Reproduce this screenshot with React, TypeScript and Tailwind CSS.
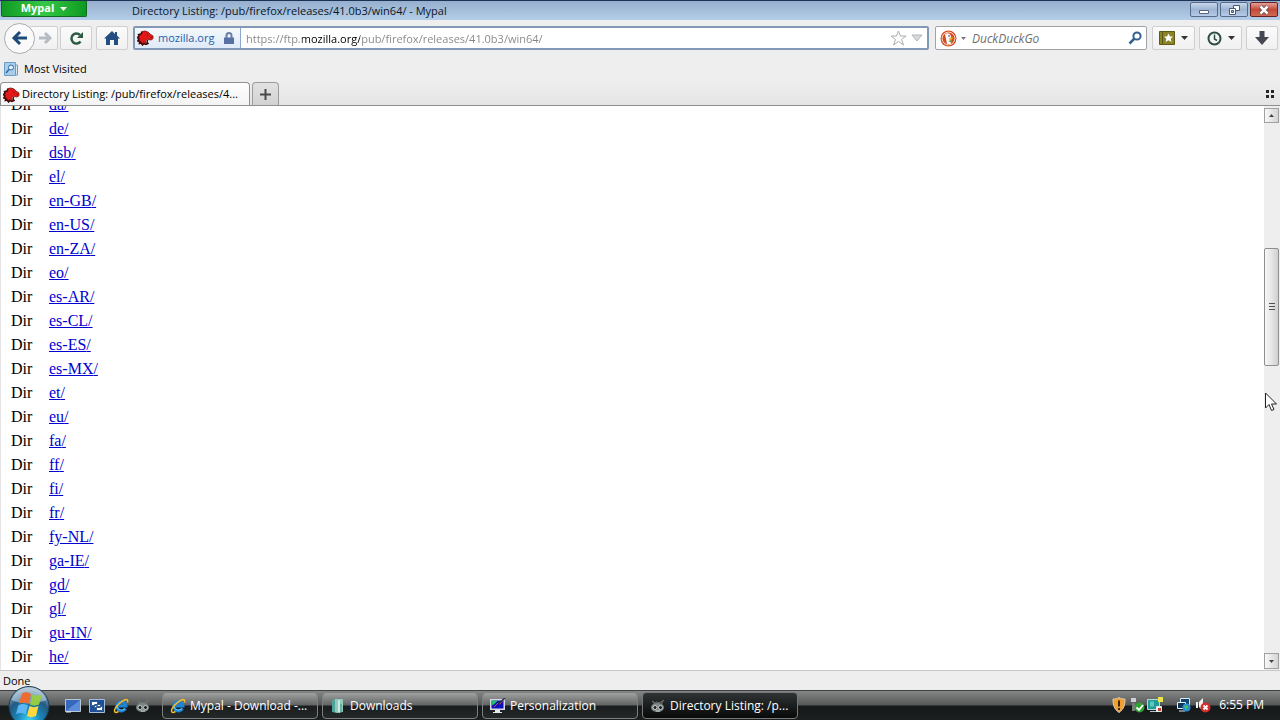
import type { ReactNode } from 'react'
import clsx from 'clsx'

const folders = [
  'da', 'de', 'dsb', 'el', 'en-GB', 'en-US', 'en-ZA', 'eo', 'es-AR', 'es-CL', 'es-ES', 'es-MX',
  'et', 'eu', 'fa', 'ff', 'fi', 'fr', 'fy-NL', 'ga-IE', 'gd', 'gl', 'gu-IN', 'he',
]

function DragonIcon() {
  return (
    <svg width="17" height="16" viewBox="0 0 17 16" className="shrink-0">
      <path d="M5 1.500L8 1l3 1 2 2 3 2v2.500l-1.500 1.500-3-.5-2 .5-.5 2 1 1.500-2 1-2-1-1.500 1.500-1-2-2 .5.500-2-2-.5 1-2-1.500-1.500L2 6 1.500 4.500 4 4z" fill="#e01818" />
      <path d="M5 1.500L4 4l-2.500.5L2 6 .5 7.500 2 9l-1 2 2 .5-.5 2 2-.5 1 2L7 13.500l2 1 2-1-1-1.500.5-2" fill="none" stroke="#3c0909" strokeWidth="1.500" />
      <path d="M5 1.500L8 1l3 1 2 2 3 2v2.500L14.500 10l-4-.5M10 5l1.500.5M13.500 7.500H15" fill="none" stroke="#7c1010" strokeWidth=".8" />
    </svg>
  )
}

function SkullIcon() {
  return (
    <svg width="16" height="16" viewBox="0 0 16 16" className="shrink-0" fill="none">
      <path d="M2 3l3 2 2-1 2 1 2-1 3-2M3 4l2 3M13 3l-2 4" stroke="#6f7876" />
      <ellipse cx="7.500" cy="9.500" rx="6.500" ry="4.500" fill="#7d8785" />
      <circle cx="5" cy="9.500" r="2" fill="#1c2020" stroke="#c6cecb" />
      <circle cx="10.500" cy="9.500" r="2" fill="#1c2020" stroke="#c6cecb" />
      <path d="M6 13h4" stroke="#c6cecb" />
    </svg>
  )
}

function IeIcon() {
  return (
    <svg width="16" height="16" viewBox="0 0 16 16" className="shrink-0" fill="none">
      <path d="M12.500 10.500A4.600 4.600 0 1 1 13 8H5" stroke="#1e84d8" strokeWidth="3" />
      <path d="M12 10.500A4.600 4.600 0 0 1 4 8.500" stroke="#6cc5f8" strokeWidth="1" />
      <path d="M14.500 4.500c.8-2.500-.5-3.500-3-2.500C7 3.800 1.500 10 1.500 13c0 2 2 1.700 4 .5" stroke="#f3bf2c" strokeWidth="1.500" />
    </svg>
  )
}

function FolderIcon() {
  return (
    <svg width="16" height="16" viewBox="0 0 16 16" className="shrink-0">
      <path d="M2 2l5-1v14l-5-1z" fill="#4fa398" />
      <path d="M5 1h8v13l-6 1-2-1z" fill="#8fcabd" />
      <path d="M8 2h2v13l-2-1z" fill="#c9ebe3" />
      <path d="M11 6v8" stroke="#4a8f88" />
    </svg>
  )
}

function MonitorIcon() {
  return (
    <svg width="16" height="16" viewBox="0 0 16 16" className="shrink-0">
      <path d="M0 1h15v11H0z" fill="#d6dae6" />
      <path d="M1.500 2.500h12v8h-12z" fill="#1010b8" />
      <path d="M2 2.500h6l-5 4.500H2z" fill="#1ec46a" />
      <path d="M4 9l4-4 2 1 5-6" stroke="#c04a7c" strokeWidth="1" fill="none" />
      <path d="M8 6l7-6" stroke="#26313f" strokeWidth="1.500" />
      <path d="M5 12h5v2h2v1H3v-1h2z" fill="#e4e7ee" />
    </svg>
  )
}

function Caret({ className }: { className?: string }) {
  return (
    <svg width="7" height="4" viewBox="0 0 7 4" className={clsx('shrink-0', className)}>
      <path d="M0 0h7L3.500 4z" fill="currentColor" />
    </svg>
  )
}

function ToolButton({ label, className, children }: { label: string; className?: string; children: ReactNode }) {
  return (
    <button
      aria-label={label}
      className={clsx('flex h-6 shrink-0 items-center justify-center gap-1.5 rounded-xs border border-[#cfcfd1] bg-linear-to-b from-[#fbfbfb] to-[#f0f0f0]', className)}
    >
      {children}
    </button>
  )
}

function TitleBar() {
  return (
    <header className="flex h-5 shrink-0 items-start border-t border-[#1c3355] bg-linear-to-b from-[#96afce] to-[#b4cde8]">
      <button className="ml-px flex h-4 w-[86px] items-center justify-center gap-1.5 rounded-b-xs border border-t-0 border-[#126a22] bg-linear-to-r from-[#0f9a22] via-[#35c846] to-[#0a9a1f] text-[11px] font-bold text-white">
        Mypal
        <Caret />
      </button>
      <h1 className="ml-[45px] flex-1 truncate text-[11px] leading-[19px] text-[#0b1526]">
        Directory Listing: /pub/firefox/releases/41.0b3/win64/ - Mypal
      </h1>
      <div className="mr-0.5 mt-px flex gap-0.5">
        <button aria-label="Minimize" className="flex h-[15px] w-7 items-center justify-center rounded-xs border border-[#566b8c] bg-linear-to-b from-[#c8d7eb] via-[#9db4d3] to-[#b5cbe6]">
          <svg width="12" height="12" viewBox="0 0 12 12"><path d="M1.500 6.500h9v3h-9z" fill="#fff" stroke="#55647e" /></svg>
        </button>
        <button aria-label="Restore" className="flex h-[15px] w-7 items-center justify-center rounded-xs border border-[#566b8c] bg-linear-to-b from-[#c8d7eb] via-[#9db4d3] to-[#b5cbe6]">
          <svg width="13" height="12" viewBox="0 0 13 12" fill="#fff" stroke="#4a5973"><path d="M5.500 1.500h6v5h-6z" /><path d="M1.500 4.500h6v6h-6z" /><path d="M3.500 6.500h2v2h-2z" fill="#9db4d3" /></svg>
        </button>
        <button aria-label="Close" className="flex h-[15px] w-7 items-center justify-center rounded-xs border border-[#6b2020] bg-linear-to-b from-[#e0a097] via-[#c34a38] to-[#cf6a54]">
          <svg width="12" height="10" viewBox="0 0 12 10"><path d="M2.500 1.500l7 7M9.500 1.500l-7 7" stroke="#57434a" strokeWidth="4" /><path d="M2.500 1.500l7 7M9.500 1.500l-7 7" stroke="#fff" strokeWidth="2.500" /></svg>
        </button>
      </div>
    </header>
  )
}

function NavBar() {
  return (
    <nav className="flex h-9 shrink-0 items-center pl-1 pr-0.5">
      <button aria-label="Back" className="z-10 flex size-[31px] shrink-0 items-center justify-center rounded-full border border-[#a9acb2] bg-[#fafafb]">
        <svg width="17" height="16" viewBox="0 0 17 16" fill="none" stroke="#1c4a78" strokeWidth="3"><path d="M9 2L3 8l6 6M3.500 8H16" /></svg>
      </button>
      <ToolButton label="Forward" className="-ml-1.5 mr-0.5 w-[29px] pl-1">
        <svg width="13" height="14" viewBox="0 0 13 14" fill="none" stroke="#b4bcc3" strokeWidth="3"><path d="M6 2l5 5-5 5M10 7H0" /></svg>
      </ToolButton>
      <ToolButton label="Reload" className="mr-1 w-8">
        <svg width="15" height="15" viewBox="0 0 15 15" fill="none"><path d="M11.500 10.500A5 5 0 1 1 11 4" stroke="#2b5c41" strokeWidth="2.500" /><path d="M14 1v6H8z" fill="#2b5c41" /></svg>
      </ToolButton>
      <ToolButton label="Home" className="w-8">
        <svg width="16" height="14" viewBox="0 0 16 14" fill="#264d80"><path d="M8 0L0 7.500h2V14h4V9h4v5h4V7.500h2l-3-3V1h-2v2z" /></svg>
      </ToolButton>
      <div className="ml-[5px] mr-1.5 flex h-6 flex-1 items-center rounded-xs border-2 border-[#8299b5] bg-white">
        <div className="flex h-full items-center gap-1 border-r border-[#8ba7cb] bg-linear-to-b from-[#f4f8fd] to-[#dfeaf8] pl-0.5 pr-1.5">
          <DragonIcon />
          <span className="w-[58px] text-[11px] text-[#1d5fa8]">mozilla.org</span>
          <svg width="10" height="13" viewBox="0 0 10 13" className="ml-1"><path d="M2.500 6V3.500a2.500 2.500 0 0 1 5 0V6" fill="none" stroke="#6a7ea8" strokeWidth="2" /><path d="M0 5.500h10V12H0z" fill="#5870a3" /></svg>
        </div>
        <input
          type="text"
          aria-label="Address"
          defaultValue="https://ftp.mozilla.org/pub/firefox/releases/41.0b3/win64/"
          className="ml-[5px] h-full min-w-0 flex-1 bg-[linear-gradient(90deg,#858585_56px,#000_56px,#000_114px,#858585_114px)] bg-clip-text text-[11px] text-transparent caret-black outline-none"
        />
        <button aria-label="Bookmark this page" className="mr-1">
          <svg width="17" height="16" viewBox="0 0 17 16"><path d="M8.500 1l2 5h5.500l-4.500 3.500 2 5.500-5-3.500-5 3.500 2-5.500L1 6h5.500z" fill="#fdfdfd" stroke="#a9adb2" /></svg>
        </button>
        <button aria-label="Show history" className="mr-1">
          <svg width="12" height="8" viewBox="0 0 12 8"><path d="M1 1h10L6 7z" fill="#d6d9dc" stroke="#b3b6ba" /></svg>
        </button>
      </div>
      <div className="mr-[5px] flex h-6 w-[212px] shrink-0 items-center rounded-xs border border-[#9fa3a8] bg-white px-1">
        <button aria-label="Search engine" className="mr-1.5 flex items-center gap-1 text-[#777]">
          <svg width="17" height="17" viewBox="0 0 17 17"><circle cx="8.500" cy="8.500" r="8" fill="#d84a20" /><circle cx="8.500" cy="8.500" r="6.400" fill="none" stroke="#f8dccb" /><path d="M5 4c3-2 6 0 6 3l-1 2 1 5H7L6 9z" fill="#fff" /><path d="M9 8l4-.5L12 9.500H9z" fill="#f5b81c" /><path d="M8 11l4-1v3z" fill="#5aa83c" /><circle cx="9" cy="6" r=".8" fill="#223" /></svg>
          <svg width="5" height="3" viewBox="0 0 5 3"><path d="M0 0h5L2.500 3z" fill="currentColor" /></svg>
        </button>
        <input type="text" aria-label="Search" placeholder="DuckDuckGo" className="h-full min-w-0 flex-1 text-xs italic outline-none placeholder:text-[#6f6f6f]" />
        <button aria-label="Go">
          <svg width="14" height="14" viewBox="0 0 14 14" fill="none" stroke="#34608f"><circle cx="9" cy="5" r="3.600" strokeWidth="2" /><path d="M6.500 7.500L1.500 12.500" strokeWidth="2.500" /></svg>
        </button>
      </div>
      <ToolButton label="Bookmarks" className="mr-1 w-[43px] text-[#333]">
        <svg width="16" height="14" viewBox="0 0 16 14"><path d="M.5.5h15v13H.5z" fill="#8a8427" stroke="#5d591b" /><path d="M3.500 1v12" stroke="#5d591b" /><path d="M9.500 2.500l1.500 3h3l-2.300 2.200.8 3.300-3-1.700-3 1.700.8-3.300L5 5.500h3z" fill="#fff" /></svg>
        <Caret />
      </ToolButton>
      <ToolButton label="History" className="mr-1 w-[43px] text-[#333]">
        <svg width="15" height="15" viewBox="0 0 15 15" fill="none" stroke="#2b4f45"><circle cx="7.500" cy="7.500" r="6" strokeWidth="2" /><path d="M7.500 3.500v4.500l2.500 1.500" strokeWidth="1.500" /></svg>
        <Caret />
      </ToolButton>
      <ToolButton label="Downloads" className="w-8">
        <svg width="14" height="14" viewBox="0 0 14 14" fill="#454850"><path d="M4.500 0h5v6H14l-7 8-7-8h4.500z" /></svg>
      </ToolButton>
    </nav>
  )
}

function BookmarksBar() {
  return (
    <div className="flex h-[26px] shrink-0 items-center pl-1">
      <button className="flex items-center gap-1.5 text-[11px] text-black">
        <svg width="14" height="14" viewBox="0 0 14 14"><path d="M.5.5h11v13H.5z" fill="#a9cdea" stroke="#6a9cc8" /><path d="M12 3h1.500v10H12" fill="#d5e7f5" stroke="#6a9cc8" /><circle cx="7" cy="5.500" r="2.500" fill="#e2f1fb" stroke="#336b9e" /><path d="M5 7.500L2 11" stroke="#336b9e" strokeWidth="1.500" /></svg>
        Most Visited
      </button>
    </div>
  )
}

function TabBar() {
  return (
    <div className="flex h-6 shrink-0 items-end justify-between border-b border-[#8e9094] bg-linear-to-b from-[#eeeeee] to-[#e4e4e5]">
      <div className="flex items-end gap-0.5">
        <button className="flex h-[23px] w-[250px] items-center gap-0.5 rounded-t border border-b-0 border-[#8e9094] bg-linear-to-b from-white to-[#f3f3f3] px-0.5 pt-px text-[11px] text-black">
          <DragonIcon />
          <span className="whitespace-nowrap">Directory Listing: /pub/firefox/releases/4...</span>
        </button>
        <button aria-label="New tab" className="flex h-[23px] w-[27px] items-center justify-center rounded-t border border-b-0 border-[#9a9c9f] bg-linear-to-b from-[#e2e2e2] to-[#d2d2d2]">
          <svg width="11" height="11" viewBox="0 0 11 11" stroke="#484848" strokeWidth="2"><path d="M5.500 0v11M0 5.500h11" /></svg>
        </button>
      </div>
      <button aria-label="List all tabs" className="mb-[7px] mr-[5px]">
        <svg width="9" height="8" viewBox="0 0 9 8" fill="#252525"><path d="M0 0h3v3H0zM5 0h3v3H5zM0 5h3v3H0zM5 5h3v3H5z" /></svg>
      </button>
    </div>
  )
}

function ScrollBar() {
  return (
    <div className="flex w-4 shrink-0 flex-col bg-[#eeeeee] pr-px">
      <button aria-label="Scroll up" className="mt-0.5 flex h-[15px] items-center justify-center border border-[#a0a0a0] bg-linear-to-r from-[#f8f8f8] to-[#d4d4d4]">
        <svg width="5" height="3" viewBox="0 0 5 3"><path d="M0 3h5L2.500 0z" fill="#444" /></svg>
      </button>
      <div className="flex-[125]" />
      <div className="flex h-[118px] flex-col items-center justify-center gap-px rounded-xs border border-[#8f8f8f] bg-linear-to-r from-[#f7f7f7] via-[#e6e6e6] to-[#cfcfcf]">
        <span className="h-0.5 w-1.5 border-t border-[#505050]" />
        <span className="h-0.5 w-1.5 border-t border-[#505050]" />
        <span className="h-0.5 w-1.5 border-t border-[#505050]" />
      </div>
      <div className="flex-[287]" />
      <button aria-label="Scroll down" className="mb-px flex h-4 items-center justify-center border border-[#a0a0a0] bg-linear-to-r from-[#f8f8f8] to-[#d4d4d4]">
        <svg width="5" height="3" viewBox="0 0 5 3"><path d="M0 0h5L2.500 3z" fill="#444" /></svg>
      </button>
    </div>
  )
}

function Listing() {
  return (
    <main className="flex min-h-0 flex-1 overflow-hidden bg-white">
      <div className="min-w-0 flex-1 overflow-hidden border-l border-[#e4e4e4]">
        <table className="-mt-[13px] ml-2.5 font-['Liberation_Serif',serif] text-base leading-6 text-black">
          <tbody>
            {folders.map((name) => (
              <tr key={name}>
                <td className="w-[38px] p-0">Dir</td>
                <td className="p-0">
                  <a href={`#${name}`} className="text-[#0000d0] underline">{name}/</a>
                </td>
              </tr>
            ))}
          </tbody>
        </table>
      </div>
      <ScrollBar />
    </main>
  )
}

const tasks = [
  { title: 'Mypal - Download -...', icon: IeIcon },
  { title: 'Downloads', icon: FolderIcon },
  { title: 'Personalization', icon: MonitorIcon },
  { title: 'Directory Listing: /p...', icon: SkullIcon, active: true },
]

function StartOrb() {
  return (
    <svg width="42" height="34" viewBox="0 0 42 34">
      <defs>
        <radialGradient id="orb" cx=".5" cy=".85" r=".85">
          <stop offset="0" stopColor="#3fd4f4" />
          <stop offset=".35" stopColor="#1a86b8" />
          <stop offset=".65" stopColor="#235a82" />
          <stop offset="1" stopColor="#a9c2d4" />
        </radialGradient>
      </defs>
      <circle cx="21" cy="20.500" r="20" fill="url(#orb)" stroke="#1d3a50" />
      <path d="M3.500 14a18.500 18.500 0 0 1 35 0c-10 4-25 5-35 0z" fill="#e4edf3" opacity=".45" />
      <path d="M14 7.500c3.500-2 6-1.500 9 .5l-2.500 10c-3-2-6-2-9.500-.5z" fill="#ee6a30" />
      <path d="M24.500 8.500c3 1.500 6 1.500 9.500 0l-3 10c-3.500 1.500-6 1.500-9 0z" fill="#94cc44" />
      <path d="M10.500 19c3.500-1.500 6.500-1.500 9.500.5l-2.500 9c-3-2-6-2-9.500-.5z" fill="#5cb4f2" />
      <path d="M21.500 20c3 1.500 6 1.500 9 0l-2.500 10c-3.500 1.500-6 1.500-9 0z" fill="#ffd840" />
    </svg>
  )
}

function Tray() {
  return (
    <div className="flex items-center pr-4 pb-0.5">
      <svg width="14" height="16" viewBox="0 0 14 16" className="mr-1"><path d="M7 .5c2 1.500 4 1.500 6 1.500 0 6-1 10-6 13.500C2 12 1 8 1 2c2 0 4 0 6-1.500z" fill="#f0a030" stroke="#d8cdb8" /><path d="M7 3.500v6M7 11v2" stroke="#3c2408" strokeWidth="2" /></svg>
      <svg width="15" height="16" viewBox="0 0 15 16" className="mr-0.5"><path d="M1 1h5v4H1z" fill="#cfd0dc" /><path d="M2 6h3v8H2z" fill="#777b80" /><circle cx="9.500" cy="10.500" r="5" fill="#2fa332" /><path d="M6.500 10.500l2.500 2.500 4-5" fill="none" stroke="#fff" strokeWidth="1.800" /></svg>
      <svg width="17" height="16" viewBox="0 0 17 16" className="mr-3"><path d="M.5 2.500h12v10H.5z" fill="#239b96" stroke="#b7d9d8" /><path d="M3 4.500h4v5H3z" fill="#5cc8c0" /><path d="M3 14.500h7" stroke="#aac9cc" /><path d="M11 0h5v5h-5z" fill="#e9e34c" /><path d="M9.500 9.500h5v5h-5z" fill="#f4f4f4" stroke="#e8e8e8" /><path d="M11 11h3v3h-3z" fill="#c8402e" /></svg>
      <svg width="15" height="16" viewBox="0 0 15 16" className="mr-1"><path d="M4.500 1.500h9v7h-9z" fill="#124470" stroke="#d6eaf5" /><path d="M1.500 5.500h8v6h-8z" fill="#0d3558" stroke="#e6f4fc" /><path d="M3 14h6" stroke="#d6eaf5" /><circle cx="10.500" cy="10.500" r="4" fill="#278ed6" /><path d="M8 9l3-1 1 2-2 3z" fill="#4cc25a" /></svg>
      <svg width="16" height="16" viewBox="0 0 16 16" className="mr-2"><path d="M1 5h2v6H1zM4 5l4-4v13l-4-4z" fill="#f2f2f2" /><circle cx="10.500" cy="10.500" r="5" fill="#d92c28" /><path d="M8.500 8.500l4 4M12.500 8.500l-4 4" stroke="#fff" strokeWidth="1.800" /></svg>
      <time className="whitespace-nowrap text-xs text-white">6:55 PM</time>
    </div>
  )
}

function TaskBar() {
  return (
    <footer className="flex h-[30px] shrink-0 items-center border-t border-[#3c4042] bg-[linear-gradient(180deg,#858787_0%,#565858_48%,#161919_52%,#1c1f1f_100%)]">
      <div className="relative h-full w-[62px] shrink-0">
        <button aria-label="Start" className="absolute bottom-0 left-2 h-[34px]">
          <StartOrb />
        </button>
      </div>
      <div className="flex w-[100px] shrink-0 items-center gap-2 pl-[3px]">
        <button aria-label="Show desktop">
          <svg width="16" height="14" viewBox="0 0 16 14"><path d="M.5.5h15v12H.5z" fill="#3568bd" stroke="#b8c7d8" /><path d="M1 12L15 1v11z" fill="#5b8cd8" /><path d="M1 13h5" stroke="#e3eaf0" /></svg>
        </button>
        <button aria-label="Switch windows">
          <svg width="16" height="14" viewBox="0 0 16 14"><path d="M.5.5h15v13H.5z" fill="#1d4e98" stroke="#a6bdd4" /><path d="M2.500 2.500h6v4h-6zM5.500 5.500h6v3h-6zM7.500 7.500h6v4h-6z" fill="#fff" stroke="#345b93" /></svg>
        </button>
        <button aria-label="Internet Explorer"><IeIcon /></button>
        <button aria-label="Mypal" className="-ml-0.5"><SkullIcon /></button>
      </div>
      <div className="flex min-w-0 flex-1 gap-1">
        {tasks.map((t) => {
          const Icon = t.icon
          return (
            <button
              key={t.title}
              className={clsx(
                'flex h-[27px] w-[156px] items-center gap-1 rounded-sm border px-[7px] text-xs whitespace-nowrap text-white',
                t.active
                  ? 'border-[#75797a] bg-linear-to-b from-[#303434] to-[#080a0a]'
                  : 'border-[#7c8080] bg-[linear-gradient(180deg,#a0a2a2_0%,#626464_48%,#1a1d1d_52%,#242828_100%)]',
              )}
            >
              <Icon />
              {t.title}
            </button>
          )
        })}
      </div>
      <Tray />
    </footer>
  )
}

export default function App() {
  return (
    <div className="relative flex h-screen flex-col overflow-hidden bg-[#eeeeee] font-['Open_Sans',sans-serif]">
      <TitleBar />
      <NavBar />
      <BookmarksBar />
      <TabBar />
      <Listing />
      <div role="status" className="h-5 shrink-0 border-t border-[#c8c8c8] pl-[3px] text-[11px] leading-[19px] text-black">Done</div>
      <TaskBar />
      {/* Mouse pointer */}
      <svg width="13" height="20" viewBox="0 0 13 20" className="pointer-events-none absolute left-[1265px] top-[392px]">
        <path d="M.5 1v15l3.500-3.500 2.500 6 2.500-1-2.500-5.500h5z" fill="#fff" stroke="#222" />
      </svg>
    </div>
  )
}
